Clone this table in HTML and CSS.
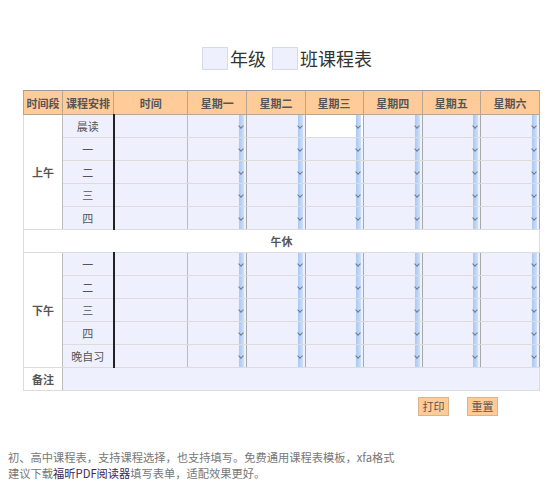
FILE: index.html
```html
<!DOCTYPE html>
<html lang="zh">
<head>
<meta charset="utf-8">
<link rel="stylesheet" href="styles.css">
</head>
<body>
<div class="page">
  <h1 class="title"><span class="blank"></span>年级<span class="blank gap"></span>班课程表</h1>
  <table class="sched">
    <colgroup>
      <col style="width:39px"><col style="width:51px"><col style="width:74px">
      <col style="width:59px"><col style="width:58px"><col style="width:58px">
      <col style="width:59px"><col style="width:58px"><col style="width:59px">
    </colgroup>
    <thead>
      <tr><th>时间段</th><th>课程安排</th><th>时间</th><th>星期一</th><th>星期二</th><th>星期三</th><th>星期四</th><th>星期五</th><th>星期六</th></tr>
    </thead>
    <tbody>
      <tr><td class="seg" rowspan="5">上午</td><td class="les">晨读</td><td class="time"></td><td class="sel"><i></i></td><td class="sel"><i></i></td><td class="sel white"><i></i></td><td class="sel"><i></i></td><td class="sel"><i></i></td><td class="sel"><i></i></td></tr>
      <tr><td class="les">一</td><td class="time"></td><td class="sel"><i></i></td><td class="sel"><i></i></td><td class="sel"><i></i></td><td class="sel"><i></i></td><td class="sel"><i></i></td><td class="sel"><i></i></td></tr>
      <tr><td class="les">二</td><td class="time"></td><td class="sel"><i></i></td><td class="sel"><i></i></td><td class="sel"><i></i></td><td class="sel"><i></i></td><td class="sel"><i></i></td><td class="sel"><i></i></td></tr>
      <tr><td class="les">三</td><td class="time"></td><td class="sel"><i></i></td><td class="sel"><i></i></td><td class="sel"><i></i></td><td class="sel"><i></i></td><td class="sel"><i></i></td><td class="sel"><i></i></td></tr>
      <tr><td class="les">四</td><td class="time"></td><td class="sel"><i></i></td><td class="sel"><i></i></td><td class="sel"><i></i></td><td class="sel"><i></i></td><td class="sel"><i></i></td><td class="sel"><i></i></td></tr>
      <tr><td class="noon" colspan="9">午休</td></tr>
      <tr><td class="seg" rowspan="5">下午</td><td class="les">一</td><td class="time"></td><td class="sel"><i></i></td><td class="sel"><i></i></td><td class="sel"><i></i></td><td class="sel"><i></i></td><td class="sel"><i></i></td><td class="sel"><i></i></td></tr>
      <tr><td class="les">二</td><td class="time"></td><td class="sel"><i></i></td><td class="sel"><i></i></td><td class="sel"><i></i></td><td class="sel"><i></i></td><td class="sel"><i></i></td><td class="sel"><i></i></td></tr>
      <tr><td class="les">三</td><td class="time"></td><td class="sel"><i></i></td><td class="sel"><i></i></td><td class="sel"><i></i></td><td class="sel"><i></i></td><td class="sel"><i></i></td><td class="sel"><i></i></td></tr>
      <tr><td class="les">四</td><td class="time"></td><td class="sel"><i></i></td><td class="sel"><i></i></td><td class="sel"><i></i></td><td class="sel"><i></i></td><td class="sel"><i></i></td><td class="sel"><i></i></td></tr>
      <tr><td class="les">晚自习</td><td class="time"></td><td class="sel"><i></i></td><td class="sel"><i></i></td><td class="sel"><i></i></td><td class="sel"><i></i></td><td class="sel"><i></i></td><td class="sel"><i></i></td></tr>
      <tr><td class="seg note">备注</td><td class="memo" colspan="8"></td></tr>
    </tbody>
  </table>
  <div class="actions"><span class="btn">打印</span><span class="btn">重置</span></div>
  <p class="desc">初、高中课程表，支持课程选择，也支持填写。免费通用课程表模板，xfa格式<br>建议下载<span class="link">福昕PDF阅读器</span>填写表单，适配效果更好。</p>
</div>
</body>
</html>
```

FILE: styles.css
```css
* { box-sizing: border-box; }
html, body { margin: 0; padding: 0; background: #fff; }
body {
  font-family: "Noto Sans CJK SC", "Noto Sans", sans-serif;
  color: #333;
}
.page { padding: 46px 0 0 23px; }
.title {
  margin: 0 0 20px 0;
  padding-left: 179px;
  font-size: 18px;
  font-weight: normal;
  line-height: 24px;
  height: 24px;
  display: flex;
  align-items: center;
  color: #333;
}
.blank {
  display: inline-block;
  width: 26px;
  height: 23px;
  background: #eef1fd;
  border: 1px solid #d6d9e6;
  margin-right: 2px;
}
.blank.gap { margin-left: 6px; }
.sched {
  border-collapse: collapse;
  table-layout: fixed;
  width: 517px;
  border: 1px solid #9a9a9a;
  font-size: 11px;
}
.sched th {
  background: #ffcc99;
  height: 24px;
  font-weight: bold;
  color: #555;
  border: 1px solid #b8a58f;
  border-top: 1px solid #9a9a9a;
  padding: 0;
  text-align: center;
}
.sched td {
  height: 23px;
  padding: 0;
  border: 1px solid #dcdcdc;
  text-align: center;
  color: #555;
}
.sched td.seg { background: #fff; font-weight: 600; color: #555; border-right: 1px solid #bdbdbd; }
.sched td.les { background: #eef1fd; border-right: 1px solid #bdbdbd; }
.sched td.time { background: #eef1fd; border-left: 2px solid #222; border-right: 1px solid #bdbdbd; }
.sched td.sel { background: #eef1fd; position: relative; border-right: 1px solid #a8a8a8; }
.sched td.sel.white { background: #fff; }
.sched td.sel i {
  position: absolute;
  right: 2px;
  top: 0;
  bottom: 0;
  width: 5px;
  background: linear-gradient(to right, #a9c8f1, #cfe0f8);
}
.sched td.sel i::after {
  content: "";
  position: absolute;
  left: 0px;
  top: 9px;
  width: 3px;
  height: 3px;
  border-right: 1px solid #6d7a8c;
  border-bottom: 1px solid #6d7a8c;
  transform: rotate(45deg);
}
.sched td.noon { background: #fff; font-weight: 600; color: #555; }
.sched td.memo { background: #eef1fd; }
.actions {
  display: flex;
  gap: 18px;
  margin: 6px 0 0 395px;
}
.btn {
  display: inline-block;
  width: 31px;
  height: 19px;
  line-height: 17px;
  background: #ffcc99;
  border: 1px solid #d9b38c;
  font-size: 11px;
  color: #555;
  text-align: center;
}
.desc {
  margin: 33px 0 0 -15px;
  font-size: 11.25px;
  line-height: 16px;
  color: #777;
}
.link { color: #3a2a5a; }
```
